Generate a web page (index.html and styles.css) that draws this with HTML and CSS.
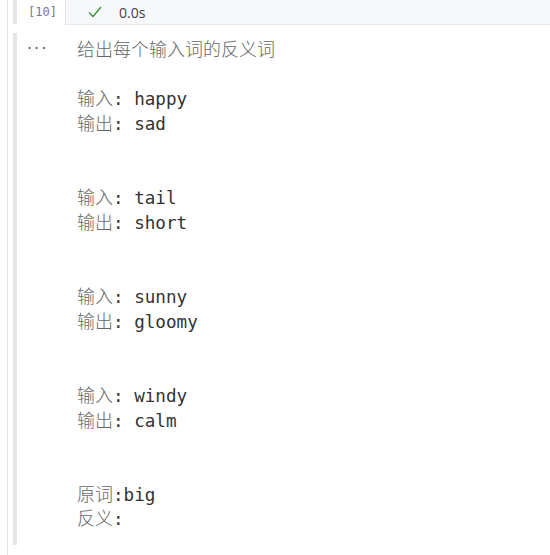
FILE: index.html
```html
<!DOCTYPE html>
<html lang="zh">
<head>
<meta charset="utf-8">
<link rel="stylesheet" href="styles.css">
</head>
<body>
<div class="page">
  <div class="cell">
    <div class="gutter">
      <div class="rail rail-top"></div>
      <div class="count">[10]</div>
    </div>
    <div class="status">
      <svg class="check" width="16" height="16" viewBox="0 0 16 16"><path d="M2 8.5 L6 12.5 L14 3" fill="none" stroke="#388a34" stroke-width="1.2"/></svg>
      <span class="time">0.0s</span>
    </div>
  </div>
  <div class="cell output-cell">
    <div class="gutter">
      <div class="rail rail-out"></div>
      <div class="dots">···</div>
    </div>
    <pre class="output"><span class="cjk">给出每个输入词的反义词</span>

<span class="cjk">输入</span>: happy
<span class="cjk">输出</span>: sad


<span class="cjk">输入</span>: tail
<span class="cjk">输出</span>: short


<span class="cjk">输入</span>: sunny
<span class="cjk">输出</span>: gloomy


<span class="cjk">输入</span>: windy
<span class="cjk">输出</span>: calm


<span class="cjk">原词</span>:big
<span class="cjk">反义</span>:</pre>
  </div>
</div>
</body>
</html>
```
FILE: styles.css
```css
html, body {
  margin: 0;
  padding: 0;
  background: #ffffff;
}
.page {
  width: 550px;
  height: 555px;
  margin-left: 7px;
  border-left: 1px solid #e3e3e3;
  overflow: hidden;
}
.cell {
  display: flex;
}
.gutter {
  position: relative;
  width: 57px;
  flex: none;
}
.rail {
  position: absolute;
  left: 5px;
  width: 4px;
  background: #e6e6ea;
}
.rail-top {
  top: 0;
  height: 24px;
}
.rail-out {
  top: 4px;
  height: 512px;
}
.count {
  padding-left: 20px;
  font-family: "DejaVu Sans Mono", monospace;
  font-size: 12px;
  color: #7a7a7a;
  line-height: 24px;
}
.status {
  flex: 1;
  height: 24px;
  background: #f7f8fa;
  border-left: 1px solid #e5e7eb;
  border-bottom: 1px solid #e5e7eb;
  display: flex;
  align-items: center;
  padding-left: 21px;
  gap: 16px;
}
.check {
  display: block;
}
.time {
  font-family: "Open Sans", "Noto Sans", sans-serif;
  font-size: 14px;
  color: #444;
}
.output-cell {
  padding-top: 4px;
}
.dots {
  padding-left: 19px;
  padding-top: 8px;
  font-family: "DejaVu Sans", sans-serif;
  font-size: 16px;
  letter-spacing: 2px;
  color: #555;
  line-height: 24px;
}
.output {
  margin: 0;
  padding-top: 9px;
  padding-left: 12px;
  font-family: "DejaVu Sans Mono", monospace;
  font-size: 17.6px;
  line-height: 24.7px;
  color: #333;
}
.cjk {
  font-family: "Noto Sans CJK SC", sans-serif;
  font-size: 18px;
  font-weight: 300;
  line-height: 1;
  color: #666;
}
```
